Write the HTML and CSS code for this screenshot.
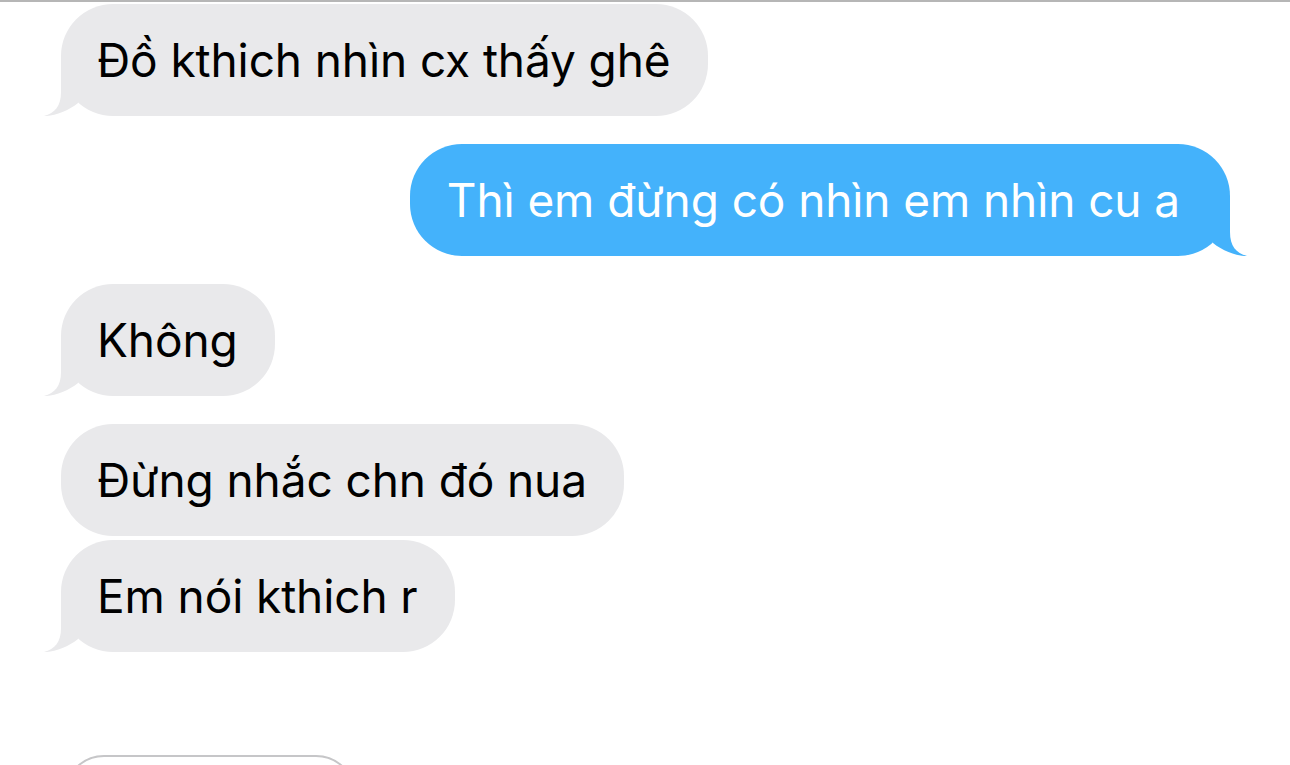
FILE: index.html
```html
<!DOCTYPE html>
<html lang="vi">
<head>
<meta charset="utf-8">
<title>Messages</title>
<link rel="stylesheet" href="styles.css">
</head>
<body>
<div class="thread">
  <div class="row in">
    <div class="bubble gray tail">Đồ kthich nhìn cx thấy ghê
      <svg class="tl" viewBox="0 0 40 56" width="40" height="56"><path d="M17 0 L17 32 C17 46 11 53 0 56 C10 56.5 24 51 34 43 L34 0 Z"/></svg>
    </div>
  </div>
  <div class="row out">
    <div class="bubble blue tail">Thì em đừng có nhìn em nhìn cu a
      <svg class="tr" viewBox="0 0 40 56" width="40" height="56"><path d="M17 0 L17 32 C17 46 11 53 0 56 C10 56.5 24 51 34 43 L34 0 Z"/></svg>
    </div>
  </div>
  <div class="row in">
    <div class="bubble gray tail">Không
      <svg class="tl" viewBox="0 0 40 56" width="40" height="56"><path d="M17 0 L17 32 C17 46 11 53 0 56 C10 56.5 24 51 34 43 L34 0 Z"/></svg>
    </div>
  </div>
  <div class="row in">
    <div class="bubble gray">Đừng nhắc chn đó nua</div>
  </div>
  <div class="row in tight">
    <div class="bubble gray tail">Em nói kthich r
      <svg class="tl" viewBox="0 0 40 56" width="40" height="56"><path d="M17 0 L17 32 C17 46 11 53 0 56 C10 56.5 24 51 34 43 L34 0 Z"/></svg>
    </div>
  </div>
  <div class="pill"></div>
</div>
</body>
</html>
```
FILE: styles.css
```css
html, body {
  margin: 0;
  padding: 0;
  background: #ffffff;
  overflow: hidden;
}
body {
  height: 765px;
  border-top: 2px solid #b6b6b6;
  box-sizing: border-box;
  font-family: Inter, "Noto Sans", "Liberation Sans", sans-serif;
}
.thread {
  display: flex;
  flex-direction: column;
  padding: 2px 60px 0 61px;
}
.row {
  display: flex;
  margin-top: 28px;
}
.row:first-child { margin-top: 0; }
.row.tight { margin-top: 4px; }
.row.in { justify-content: flex-start; }
.row.out { justify-content: flex-end; }
.bubble {
  position: relative;
  height: 112px;
  box-sizing: border-box;
  display: flex;
  align-items: center;
  padding: 0 37px 0 36px;
  border-radius: 52px;
  font-size: 46px;
  letter-spacing: -0.1px;
  white-space: nowrap;
}
.gray { background: #e9e9eb; color: #000; }
.blue { background: #44b2fb; color: #fff; padding: 0 50px 0 37px; }
.bubble svg {
  position: absolute;
  bottom: 0;
}
.gray svg { fill: #e9e9eb; }
.blue svg { fill: #44b2fb; }
.tl { left: -17px; }
.tr { right: -17px; transform: scaleX(-1); }
.pill {
  margin-top: 103px;
  margin-left: 3px;
  width: 292px;
  height: 80px;
  border: 2px solid #c6c6c8;
  border-radius: 40px;
  box-sizing: border-box;
}
```
